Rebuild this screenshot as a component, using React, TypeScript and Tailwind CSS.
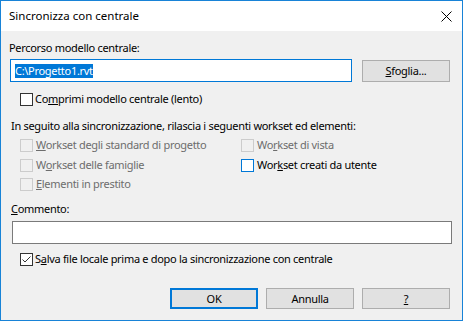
import React from "react";

function Box({ disabled, checked, focus }: { disabled?: boolean; checked?: boolean; focus?: boolean }) {
  const cls = disabled
    ? "border-[#cccccc] bg-[#f0f0f0]"
    : focus
    ? "border-[#0078d7] bg-white"
    : "border-[#333333] bg-white";
  return (
    <div className={`w-[13px] h-[13px] border shrink-0 flex items-center justify-center ${cls}`}>
      {checked && (
        <svg width="11" height="11" viewBox="0 0 11 11">
          <polyline points="1.5,5.5 4,8 9.5,2.5" fill="none" stroke="#333333" strokeWidth="1" />
        </svg>
      )}
    </div>
  );
}

function Check({
  label,
  disabled,
  checked,
  focus,
  gap = "gap-[3px]",
}: {
  label: React.ReactNode;
  disabled?: boolean;
  checked?: boolean;
  focus?: boolean;
  gap?: string;
}) {
  return (
    <div className={`flex items-center h-[16px] ${gap} ${disabled ? "text-[#6d6d6d]" : "text-black"}`}>
      <Box disabled={disabled} checked={checked} focus={focus} />
      <span className="leading-[16px] whitespace-nowrap">{label}</span>
    </div>
  );
}

function Btn({ children, def }: { children: React.ReactNode; def?: boolean }) {
  return (
    <div
      className={`w-[88px] h-[21px] bg-[#e1e1e1] flex items-center justify-center leading-[16px] ${
        def ? "border-2 border-[#0078d7]" : "border border-[#adadad]"
      }`}
    >
      {children}
    </div>
  );
}

export default function App() {
  return (
    <div className="w-[463px] h-[321px] border border-[#1883d7] bg-[#f0f0f0] flex flex-col text-[11px] tracking-[-0.3px] text-black font-['Noto_Sans',sans-serif]">
      <div className="h-[30px] bg-white flex items-center justify-between pl-[8px] pr-[10px] shrink-0">
        <span className="leading-[16px] text-[11.5px] tracking-normal">Sincronizza con centrale</span>
        <svg width="11" height="11" viewBox="0 0 11 11">
          <path d="M0.5 0.5 L10.5 10.5 M10.5 0.5 L0.5 10.5" stroke="#000" strokeWidth="1" />
        </svg>
      </div>
      <div className="flex flex-col pl-[8px] pr-[10px]">
        <div className="mt-[9px] h-[16px] leading-[16px]">Percorso modello centrale:</div>
        <div className="mt-[3px] flex items-start h-[23px]">
          <div className="ml-[1px] w-[342px] h-[23px] border border-[#0078d7] bg-white flex items-center pl-[4px]">
            <span className="bg-[#0078d7] text-white leading-[14px] h-[14px]">C:\Progetto1.rvt</span>
          </div>
          <div className="ml-[10px] mt-[1px] w-[88px] h-[22px] border border-[#adadad] bg-[#e1e1e1] flex items-center justify-center leading-[16px]">
            <span>
              <u>S</u>foglia...
            </span>
          </div>
        </div>
        <div className="mt-[9px] pl-[11px]">
          <Check
            gap="gap-[2px]"
            label={
              <>
                Co<u>m</u>primi modello centrale (lento)
              </>
            }
          />
        </div>
        <div className="mt-[11px] h-[16px] leading-[16px] pl-[2px]">
          In seguito alla sincronizzazione, rilascia i seguenti workset ed elementi:
        </div>
        <div className="mt-[3px] flex pl-[11px]">
          <div className="w-[221px] flex flex-col">
            <div className="h-[20px]">
              <Check
                disabled
                label={
                  <>
                    <u>W</u>orkset degli standard di progetto
                  </>
                }
              />
            </div>
            <div className="h-[19px]">
              <Check
                disabled
                label={
                  <>
                    W<u>o</u>rkset delle famiglie
                  </>
                }
              />
            </div>
            <div className="h-[16px]">
              <Check
                disabled
                label={
                  <>
                    <u>E</u>lementi in prestito
                  </>
                }
              />
            </div>
          </div>
          <div className="flex flex-col">
            <div className="h-[20px]">
              <Check
                disabled
                label={
                  <>
                    Wo<u>r</u>kset di vista
                  </>
                }
              />
            </div>
            <div className="h-[19px]">
              <Check
                focus
                label={
                  <>
                    Wor<u>k</u>set creati da utente
                  </>
                }
              />
            </div>
          </div>
        </div>
        <div className="mt-[9px] h-[16px] leading-[16px] pl-[2px]">
          <u>C</u>ommento:
        </div>
        <div className="mt-[4px] ml-[3px] w-[440px] h-[23px] border border-[#7a7a7a] bg-white" />
        <div className="mt-[7px] pl-[11px]">
          <Check
            checked
            gap="gap-[2px]"
            label={
              <>
                S<u>a</u>lva file locale prima e dopo la sincronizzazione con centrale
              </>
            }
          />
        </div>
        <div className="mt-[21px] flex justify-end gap-[8px] pr-[2px]">
          <Btn def>OK</Btn>
          <Btn>Annulla</Btn>
          <Btn>
            <u>?</u>
          </Btn>
        </div>
      </div>
    </div>
  );
}
